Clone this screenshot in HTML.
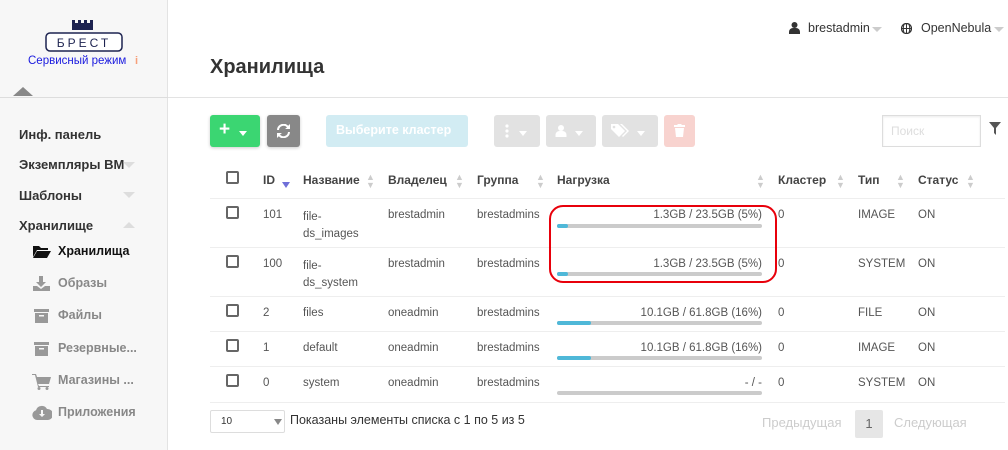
<!DOCTYPE html>
<html><head><meta charset="utf-8"><style>
*{margin:0;padding:0;box-sizing:border-box}
body{width:1008px;height:450px;overflow:hidden;background:#fff;font-family:"Liberation Sans","DejaVu Sans",sans-serif;position:relative;color:#333}
.a{position:absolute;white-space:nowrap}
#sb{position:absolute;left:0;top:0;width:168px;height:450px;background:#f7f7f7;border-right:1px solid #e3e3e3}
.nav{font-size:13px;font-weight:bold;color:#333}
.sub{font-size:12.5px;font-weight:bold;color:#888}
.th{font-size:12px;font-weight:bold;color:#444}
.td{font-size:11.5px;color:#555;margin-top:2px}
.cb{position:absolute;width:13px;height:13px;border:2px solid #666;border-radius:2px}
.bar{position:absolute;left:557px;width:205px;height:4px;background:#cbcbcb;border-radius:2px}
.bar i{position:absolute;left:0;top:0;height:4px;background:#4fb8d8;border-radius:2px}
.ld{position:absolute;width:205px;left:557px;text-align:right;font-size:11.5px;color:#555;margin-top:2px}
.sort{position:absolute;font-size:9px;color:#ccc;line-height:8px}
.hl{position:absolute;left:210px;width:795px;height:1px;background:#eee}
.btn{position:absolute;top:115px;height:32px;border-radius:3px}
.tri{display:inline-block;width:0;height:0;border-left:4px solid transparent;border-right:4px solid transparent;border-top:5px solid #fff;vertical-align:middle}
</style></head><body>
<div id="sb">
<svg class="a" style="left:45px;top:18px" width="78" height="36" viewBox="0 0 78 36">
<path d="M27 2h3v3h3v-3h3v3h3v-3h3v3h3v-3h3v10h-21z" fill="#1d2350"/>
<rect x="1" y="15" width="76" height="18" rx="4" fill="#fff" stroke="#1d2350" stroke-width="1.5"/>
<text x="39" y="29" text-anchor="middle" font-family="Liberation Sans" font-size="12" fill="#1d2350" letter-spacing="3" transform="scale(1,1)">БРЕСТ</text>
</svg>
<div class="a" style="left:28px;top:55px;font-size:11.5px;color:#1a1adf">Сервисный режим</div>
<div class="a" style="left:135px;top:55px;font-size:11px;color:#f7a07a;font-weight:bold">i</div>
<div class="a" style="left:13px;top:87px;width:0;height:0;border-left:10px solid transparent;border-right:10px solid transparent;border-bottom:9px solid #888"></div>
<div class="a" style="left:0;top:97px;width:168px;height:1px;background:#ddd"></div>
<div class="a nav" style="left:19px;top:127px">Инф. панель</div>
<div class="a nav" style="left:19px;top:157px">Экземпляры ВМ</div>
<div class="a" style="left:123px;top:162px;border-left:6px solid transparent;border-right:6px solid transparent;border-top:6px solid #ddd"></div>
<div class="a nav" style="left:19px;top:188px">Шаблоны</div>
<div class="a" style="left:123px;top:192px;border-left:6px solid transparent;border-right:6px solid transparent;border-top:6px solid #ddd"></div>
<div class="a nav" style="left:19px;top:218px">Хранилище</div>
<div class="a" style="left:123px;top:222px;border-left:6px solid transparent;border-right:6px solid transparent;border-bottom:6px solid #ddd"></div>
<svg class="a" style="left:33px;top:245px" width="18" height="13" viewBox="0 0 18 13"><path d="M0 1h6l2 2h7v2H4L0 12z M4 6h14l-4 7H0z" fill="#111"/></svg>
<div class="a" style="left:58px;top:244px;font-size:12.5px;font-weight:bold;color:#111">Хранилища</div>
<svg class="a" style="left:33px;top:276px" width="17" height="15" viewBox="0 0 17 15"><path d="M6 0h4v6h3l-5 5-5-5h3z M0 10h4l4 3 4-3h5v5H0z" fill="#999"/></svg>
<div class="a sub" style="left:58px;top:276px">Образы</div>
<svg class="a" style="left:34px;top:309px" width="15" height="14" viewBox="0 0 15 14"><rect x="0" y="0" width="15" height="3" fill="#999"/><rect x="1" y="4" width="13" height="10" fill="#999"/><rect x="5" y="6" width="5" height="1.5" fill="#f7f7f7"/></svg>
<div class="a sub" style="left:58px;top:308px">Файлы</div>
<svg class="a" style="left:34px;top:342px" width="15" height="14" viewBox="0 0 15 14"><rect x="0" y="0" width="15" height="3" fill="#999"/><rect x="1" y="4" width="13" height="10" fill="#999"/><rect x="5" y="6" width="5" height="1.5" fill="#f7f7f7"/></svg>
<div class="a sub" style="left:58px;top:341px">Резервные...</div>
<svg class="a" style="left:32px;top:374px" width="19" height="16" viewBox="0 0 19 16"><path d="M0 0h4l1 3h14l-2 7H6l1 2h10v1H6L3 1H0z" fill="#999"/><circle cx="7" cy="14.5" r="1.5" fill="#999"/><circle cx="15" cy="14.5" r="1.5" fill="#999"/></svg>
<div class="a sub" style="left:58px;top:373px">Магазины ...</div>
<svg class="a" style="left:32px;top:405px" width="20" height="15" viewBox="0 0 20 15"><path d="M5 15a5 5 0 0 1-1-9.8A6 6 0 0 1 15 4a5 5 0 0 1 1 11z" fill="#999"/><path d="M9 5h2v4h2l-3 3-3-3h2z" fill="#f7f7f7"/></svg>
<div class="a sub" style="left:58px;top:405px">Приложения</div>
</div>

<div class="a" style="left:168px;top:97px;width:840px;height:1px;background:#e3e3e3"></div>
<div class="a" style="left:210px;top:56px;font-size:20px;font-weight:bold;color:#333">Хранилища</div>

<svg class="a" style="left:789px;top:22px" width="11" height="12" viewBox="0 0 11 12"><circle cx="5.5" cy="3" r="3" fill="#333"/><path d="M0 12v-2a4 4 0 0 1 4-4h3a4 4 0 0 1 4 4v2z" fill="#333"/></svg>
<div class="a" style="left:808px;top:21px;font-size:12.5px;color:#333">brestadmin</div>
<div class="a" style="left:872px;top:27px;border-left:5px solid transparent;border-right:5px solid transparent;border-top:5px solid #ccc"></div>
<svg class="a" style="left:901px;top:23px" width="11" height="11" viewBox="0 0 11 11"><circle cx="5.5" cy="5.5" r="5" fill="none" stroke="#333" stroke-width="1.3"/><path d="M0.5 5.5h10M5.5 0.5v10M3 1.5q-1.5 4 0 8M8 1.5q1.5 4 0 8" stroke="#333" stroke-width="1" fill="none"/></svg>
<div class="a" style="left:921px;top:21px;font-size:12.5px;color:#333">OpenNebula</div>
<div class="a" style="left:994px;top:27px;border-left:5px solid transparent;border-right:5px solid transparent;border-top:5px solid #ccc"></div>

<div class="btn" style="left:210px;width:50px;background:#3bd672;box-shadow:0 1px 3px rgba(0,0,0,.2)"><span class="a" style="left:9px;top:5px;color:#fff;font-size:19px;font-weight:bold;line-height:20px">+</span><span class="a" style="left:29px;top:10px"><i class="tri"></i></span></div>
<div class="btn" style="left:267px;width:33px;background:#888;box-shadow:0 1px 3px rgba(0,0,0,.2)"><svg class="a" style="left:10px;top:9px" width="13" height="14" viewBox="0 0 13 14"><path d="M2 6a4.5 4.5 0 0 1 8-2.5L8 5h5V0l-1.8 1.8A6.5 6.5 0 0 0 0 6z M11 8a4.5 4.5 0 0 1-8 2.5L5 9H0v5l1.8-1.8A6.5 6.5 0 0 0 13 8z" fill="#fff"/></svg></div>
<div class="btn" style="left:326px;width:142px;background:#d2ecf3"><span class="a" style="left:10px;top:8px;color:#fff;font-size:12.5px;font-weight:bold">Выберите кластер</span></div>
<div class="btn" style="left:494px;width:46px;background:#e2e2e2"><svg class="a" style="left:11px;top:9px" width="4" height="14"><circle cx="2" cy="2" r="1.6" fill="#fff"/><circle cx="2" cy="7" r="1.6" fill="#fff"/><circle cx="2" cy="12" r="1.6" fill="#fff"/></svg><span class="a" style="left:25px;top:10px"><i class="tri"></i></span></div>
<div class="btn" style="left:546px;width:50px;background:#e2e2e2"><svg class="a" style="left:9px;top:10px" width="12" height="12" viewBox="0 0 11 12"><circle cx="5.5" cy="3" r="3" fill="#fff"/><path d="M0 12v-2a4 4 0 0 1 4-4h3a4 4 0 0 1 4 4v2z" fill="#fff"/></svg><span class="a" style="left:29px;top:10px"><i class="tri"></i></span></div>
<div class="btn" style="left:602px;width:56px;background:#e2e2e2"><svg class="a" style="left:9px;top:9px" width="18" height="14" viewBox="0 0 18 14"><path d="M0 0h7l7 7-6 6-8-8z" fill="#fff"/><circle cx="3" cy="3" r="1.3" fill="#e2e2e2"/><path d="M9 0h2l7 7-6 6-1-1 5-5z" fill="#fff"/></svg><span class="a" style="left:35px;top:10px"><i class="tri"></i></span></div>
<div class="btn" style="left:664px;width:31px;background:#f8d3cf"><svg class="a" style="left:10px;top:9px" width="11" height="13" viewBox="0 0 11 13"><rect x="0" y="1" width="11" height="2" fill="#fff"/><rect x="3.5" y="0" width="4" height="1.5" fill="#fff"/><path d="M1 4h9l-1 9H2z" fill="#fff"/></svg></div>
<div class="a" style="left:882px;top:115px;width:99px;height:32px;border:1px solid #ddd;box-shadow:inset 0 1px 2px rgba(0,0,0,.08)"><span class="a" style="left:8px;top:8px;font-size:12px;color:#ddd">Поиск</span></div>
<svg class="a" style="left:989px;top:122px" width="12" height="13" viewBox="0 0 12 13"><path d="M0 0h12L7 6v7l-2-2V6z" fill="#555"/></svg>

<div class="cb" style="left:226px;top:171px"></div>
<div class="a th" style="left:263px;top:173px">ID</div>
<div class="a" style="left:282px;top:182px;border-left:4px solid transparent;border-right:4px solid transparent;border-top:6px solid #6f6fd8"></div>
<div class="a th" style="left:303px;top:173px">Название</div>
<div class="sort" style="left:366px;top:173px">▲<br>▼</div>
<div class="a th" style="left:388px;top:173px">Владелец</div>
<div class="sort" style="left:455px;top:173px">▲<br>▼</div>
<div class="a th" style="left:477px;top:173px">Группа</div>
<div class="sort" style="left:536px;top:173px">▲<br>▼</div>
<div class="a th" style="left:557px;top:173px">Нагрузка</div>
<div class="sort" style="left:756px;top:173px">▲<br>▼</div>
<div class="a th" style="left:778px;top:173px">Кластер</div>
<div class="sort" style="left:836px;top:173px">▲<br>▼</div>
<div class="a th" style="left:858px;top:173px">Тип</div>
<div class="sort" style="left:896px;top:173px">▲<br>▼</div>
<div class="a th" style="left:918px;top:173px">Статус</div>
<div class="sort" style="left:966px;top:173px">▲<br>▼</div>
<div class="hl" style="top:198px"></div>

<div class="cb" style="left:226px;top:206px"></div>
<div class="a td" style="left:263px;top:207px">101</div>
<div class="a td" style="left:303px;top:207px;line-height:17px">file-<br>ds_images</div>
<div class="a td" style="left:388px;top:207px">brestadmin</div>
<div class="a td" style="left:477px;top:207px">brestadmins</div>
<div class="ld" style="top:207px">1.3GB / 23.5GB (5%)</div>
<div class="bar" style="top:224px"><i style="width:11px"></i></div>
<div class="a td" style="left:778px;top:207px">0</div>
<div class="a td" style="left:858px;top:207px">IMAGE</div>
<div class="a td" style="left:918px;top:207px">ON</div>
<div class="hl" style="top:247px"></div>

<div class="cb" style="left:226px;top:255px"></div>
<div class="a td" style="left:263px;top:256px">100</div>
<div class="a td" style="left:303px;top:256px;line-height:17px">file-<br>ds_system</div>
<div class="a td" style="left:388px;top:256px">brestadmin</div>
<div class="a td" style="left:477px;top:256px">brestadmins</div>
<div class="ld" style="top:256px">1.3GB / 23.5GB (5%)</div>
<div class="bar" style="top:272px"><i style="width:11px"></i></div>
<div class="a td" style="left:778px;top:256px">0</div>
<div class="a td" style="left:858px;top:256px">SYSTEM</div>
<div class="a td" style="left:918px;top:256px">ON</div>
<div class="hl" style="top:296px"></div>

<div class="cb" style="left:226px;top:304px"></div>
<div class="a td" style="left:263px;top:305px">2</div>
<div class="a td" style="left:303px;top:305px">files</div>
<div class="a td" style="left:388px;top:305px">oneadmin</div>
<div class="a td" style="left:477px;top:305px">brestadmins</div>
<div class="ld" style="top:305px">10.1GB / 61.8GB (16%)</div>
<div class="bar" style="top:321px"><i style="width:34px"></i></div>
<div class="a td" style="left:778px;top:305px">0</div>
<div class="a td" style="left:858px;top:305px">FILE</div>
<div class="a td" style="left:918px;top:305px">ON</div>
<div class="hl" style="top:331px"></div>

<div class="cb" style="left:226px;top:339px"></div>
<div class="a td" style="left:263px;top:340px">1</div>
<div class="a td" style="left:303px;top:340px">default</div>
<div class="a td" style="left:388px;top:340px">oneadmin</div>
<div class="a td" style="left:477px;top:340px">brestadmins</div>
<div class="ld" style="top:340px">10.1GB / 61.8GB (16%)</div>
<div class="bar" style="top:356px"><i style="width:34px"></i></div>
<div class="a td" style="left:778px;top:340px">0</div>
<div class="a td" style="left:858px;top:340px">IMAGE</div>
<div class="a td" style="left:918px;top:340px">ON</div>
<div class="hl" style="top:366px"></div>

<div class="cb" style="left:226px;top:374px"></div>
<div class="a td" style="left:263px;top:375px">0</div>
<div class="a td" style="left:303px;top:375px">system</div>
<div class="a td" style="left:388px;top:375px">oneadmin</div>
<div class="a td" style="left:477px;top:375px">brestadmins</div>
<div class="ld" style="top:375px">- / -</div>
<div class="bar" style="top:391px"></div>
<div class="a td" style="left:778px;top:375px">0</div>
<div class="a td" style="left:858px;top:375px">SYSTEM</div>
<div class="a td" style="left:918px;top:375px">ON</div>
<div class="hl" style="top:402px"></div>

<div class="a" style="left:549px;top:205px;width:228px;height:78px;border:2.5px solid #e8000b;border-radius:14px"></div>

<div class="a" style="left:210px;top:410px;width:75px;height:23px;border:1px solid #ddd;border-radius:2px"><span class="a" style="left:10px;top:5px;font-size:10px;color:#333">10</span><span class="a" style="left:63px;top:8px;border-left:4px solid transparent;border-right:4px solid transparent;border-top:6px solid #888"></span></div>
<div class="a" style="left:290px;top:413px;font-size:12.5px;color:#333">Показаны элементы списка с 1 по 5 из 5</div>
<div class="a" style="left:762px;top:415px;font-size:13px;color:#ccc">Предыдущая</div>
<div class="a" style="left:855px;top:410px;width:28px;height:28px;background:#e6e6e6;border-radius:2px;text-align:center;line-height:28px;font-size:13px;color:#666">1</div>
<div class="a" style="left:894px;top:415px;font-size:13px;color:#ccc">Следующая</div>
</body></html>
